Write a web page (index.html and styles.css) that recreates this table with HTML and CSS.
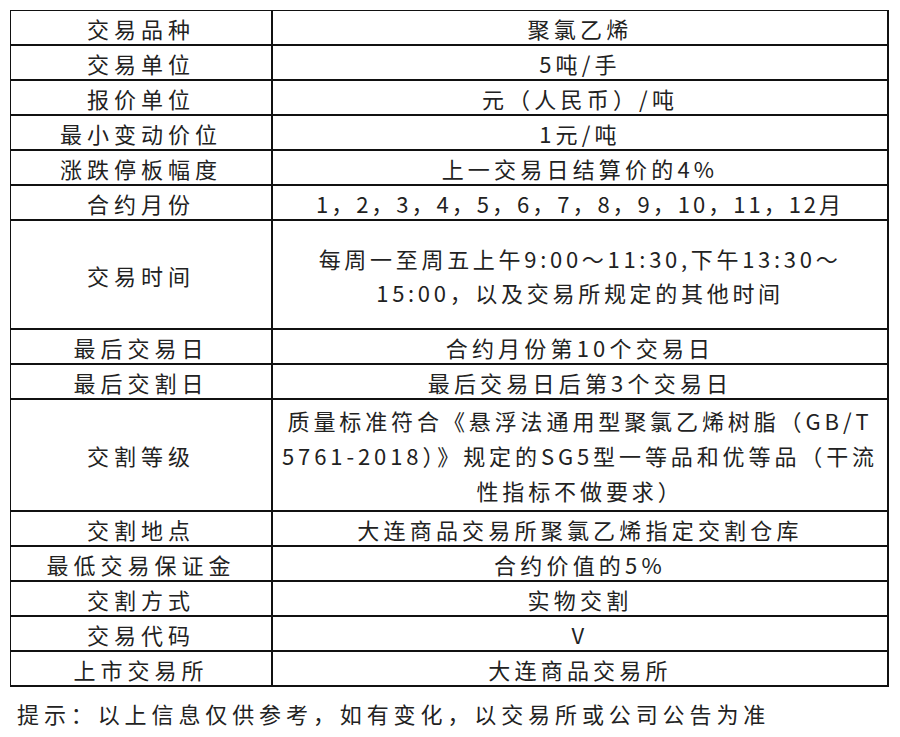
FILE: index.html
```html
<!DOCTYPE html>
<html lang="zh-CN">
<head>
<meta charset="utf-8">
<title>聚氯乙烯合约</title>
<link rel="stylesheet" href="styles.css">
</head>
<body>
<table class="spec">
  <tbody>
    <tr><td class="k">交易品种</td><td class="v">聚氯乙烯</td></tr>
    <tr><td class="k">交易单位</td><td class="v">5吨/手</td></tr>
    <tr><td class="k">报价单位</td><td class="v">元（人民币）/吨</td></tr>
    <tr><td class="k">最小变动价位</td><td class="v">1元/吨</td></tr>
    <tr><td class="k">涨跌停板幅度</td><td class="v">上一交易日结算价的4%</td></tr>
    <tr><td class="k">合约月份</td><td class="v nums">1，2，3，4，5，6，7，8，9，10，11，12月</td></tr>
    <tr class="tall2"><td class="k">交易时间</td><td class="v multi">每周一至周五上午9:00～11:30,下午13:30～<br>15:00，以及交易所规定的其他时间</td></tr>
    <tr><td class="k">最后交易日</td><td class="v">合约月份第10个交易日</td></tr>
    <tr><td class="k">最后交割日</td><td class="v">最后交易日后第3个交易日</td></tr>
    <tr class="tall3"><td class="k">交割等级</td><td class="v multi3">质量标准符合《悬浮法通用型聚氯乙烯树脂（GB/T<br>5761-2018）》规定的SG5型一等品和优等品（干流<br>性指标不做要求）</td></tr>
    <tr><td class="k">交割地点</td><td class="v">大连商品交易所聚氯乙烯指定交割仓库</td></tr>
    <tr><td class="k">最低交易保证金</td><td class="v">合约价值的5%</td></tr>
    <tr><td class="k">交割方式</td><td class="v">实物交割</td></tr>
    <tr><td class="k">交易代码</td><td class="v">V</td></tr>
    <tr><td class="k">上市交易所</td><td class="v">大连商品交易所</td></tr>
  </tbody>
</table>
<p class="note">提示：以上信息仅供参考，如有变化，以交易所或公司公告为准</p>
</body>
</html>
```

FILE: styles.css
```css
html, body {
  margin: 0;
  padding: 0;
  background: #ffffff;
}

body {
  font-family: "Noto Sans CJK SC", "Noto Sans", sans-serif;
  color: #222222;
  font-size: 22px;
}

.spec {
  border-collapse: collapse;
  margin: 10px 0 0 10px;
  width: 879px;
  table-layout: fixed;
}

.spec td {
  border: 2px solid #111111;
  padding: 0;
  height: 33px;
  text-align: center;
  vertical-align: middle;
  letter-spacing: 5px;
  line-height: 26px;
  white-space: nowrap;
}

.spec tr:first-child td {
  border-top-width: 1px;
}

.spec td.k {
  width: 260px;
  border-left-width: 1px;
}

.spec td.v {
  letter-spacing: 4.2px;
}

.spec td.nums {
  letter-spacing: 3px;
}

.spec tr.tall2 td {
  height: 107px;
}

.spec tr.tall3 td {
  height: 110px;
}

.spec td.multi {
  line-height: 34px;
  letter-spacing: 3.7px;
}

.spec td.multi3 {
  line-height: 35px;
  letter-spacing: 3.9px;
}

.note {
  margin: 13px 0 0 17px;
  letter-spacing: 4.9px;
  line-height: 26px;
}
```
